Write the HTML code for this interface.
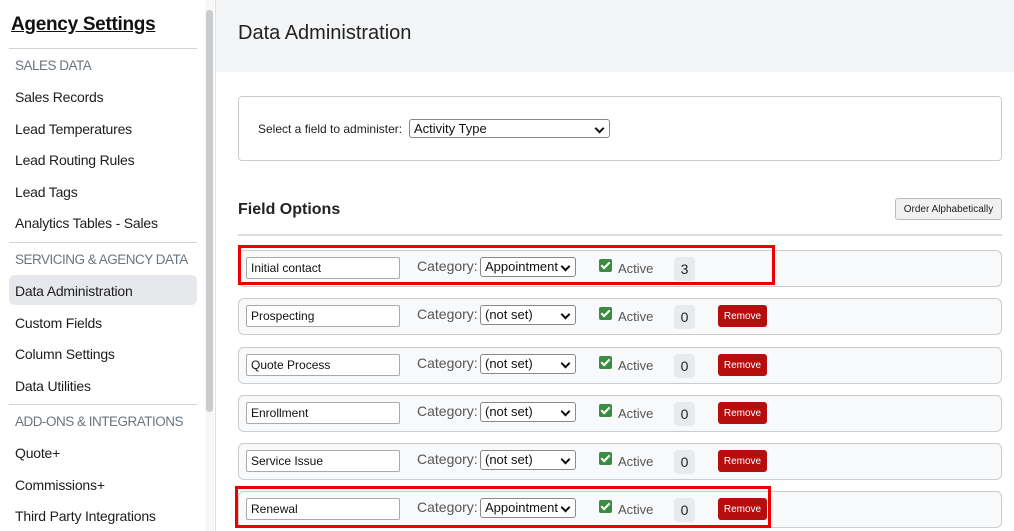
<!DOCTYPE html><html><head><style>
body{margin:0;width:1014px;height:531px;overflow:hidden;font-family:"Liberation Sans",sans-serif;background:#fff;position:relative;color:#212529}
.sb{position:absolute;left:0;top:0;width:204px;height:531px}
.sb h1{position:absolute;left:11px;top:14px;margin:0;font-size:19px;font-weight:bold;text-decoration:underline;color:#111;letter-spacing:-0.3px}
.it{position:absolute;left:15px;font-size:14px;color:#1d1d1d;white-space:nowrap;letter-spacing:-0.2px}
.sec{position:absolute;left:15px;font-size:13.5px;color:#6c757d;white-space:nowrap;letter-spacing:-0.5px}
.hr{position:absolute;left:9px;width:188px;border-top:1px solid #ced4da}
.act{position:absolute;left:9px;top:275px;width:188px;height:30px;background:#e6e8eb;border-radius:6px}
.scroll{position:absolute;left:205px;top:0;width:9px;height:531px;background:#f7f7f7}
.thumb{position:absolute;left:206px;top:10px;width:7px;height:402px;background:#c9cbcd;border-radius:4px}
.vl{position:absolute;left:215px;top:0;height:531px;border-left:1px solid #dee2e6}
.hd{position:absolute;left:216px;top:0;right:0;height:72px;background:#f4f5f6}
.hd div{position:absolute;left:22px;top:22px;font-size:20px;color:#222}
.box{position:absolute;left:238px;top:96px;width:762px;height:63px;border:1px solid #ccc;border-radius:4px}
.lbl{position:absolute;font-size:12px;color:#222}
.sel{position:absolute;border:1px solid #888;border-radius:3px;background:#fff;font-size:13px;padding-left:4px;box-sizing:border-box;line-height:18px;color:#111}
.sel:after{content:"";position:absolute;right:6px;top:5px;width:5px;height:5px;border-right:2px solid #111;border-bottom:2px solid #111;transform:rotate(45deg)}
.row{position:absolute;left:238px;width:762px;height:35px;border:1px solid #ccc;border-radius:6px;background:#f8f9fa}
.row .in{position:absolute;left:7px;top:6px;width:154px;height:22px;border:1px solid #aaa;border-radius:2px;background:#fff;box-sizing:border-box;font-size:12px;padding-left:4px;line-height:20px;color:#111}
.row .cat{position:absolute;left:178px;top:7px;font-size:14px;color:#555}
.row .sel{left:241px;top:6px;width:96px;height:20px}
.cb{position:absolute;left:360px;top:8px;width:13px;height:13px;background:#3c8c40;border-radius:2px}
.cb:after{content:"";position:absolute;left:4px;top:1px;width:3px;height:7px;border-right:2px solid #fff;border-bottom:2px solid #fff;transform:rotate(45deg)}
.row .a{position:absolute;left:379px;top:10px;font-size:13px;color:#555}
.cnt{position:absolute;left:435px;top:6px;width:21px;height:24px;background:#e9eaec;border-radius:4px;text-align:center;line-height:24px;font-size:14px;color:#222}
.rm{position:absolute;left:479px;top:6px;width:49px;height:22px;background:#b50e0e;border-radius:3px;color:#fff;font-size:10px;display:flex;align-items:center;justify-content:center}
.red{position:absolute;border:3px solid #e00;box-sizing:border-box}
</style></head><body>
<div class="sb">
<h1>Agency Settings</h1>
<div class="hr" style="top:48px"></div>
<div class="sec" style="top:58px">SALES DATA</div>
<div class="it" style="top:89px">Sales Records</div>
<div class="it" style="top:121px">Lead Temperatures</div>
<div class="it" style="top:152px">Lead Routing Rules</div>
<div class="it" style="top:184px">Lead Tags</div>
<div class="it" style="top:215px">Analytics Tables - Sales</div>
<div class="hr" style="top:242px"></div>
<div class="sec" style="top:252px">SERVICING &amp; AGENCY DATA</div>
<div class="act"></div>
<div class="it" style="top:283px">Data Administration</div>
<div class="it" style="top:315px">Custom Fields</div>
<div class="it" style="top:346px">Column Settings</div>
<div class="it" style="top:378px">Data Utilities</div>
<div class="hr" style="top:404px"></div>
<div class="sec" style="top:414px">ADD-ONS &amp; INTEGRATIONS</div>
<div class="it" style="top:445px">Quote+</div>
<div class="it" style="top:477px">Commissions+</div>
<div class="it" style="top:508px">Third Party Integrations</div>
</div>
<div class="scroll"></div><div class="thumb"></div><div class="vl"></div>
<div class="hd"><div>Data Administration</div></div>
<div class="box"></div>
<div class="lbl" style="left:258px;top:122px">Select a field to administer:</div>
<div class="sel" style="left:409px;top:119px;width:201px;height:19px">Activity Type</div>
<div style="position:absolute;left:238px;top:201px;font-size:16px;font-weight:bold;color:#222">Field Options</div>
<div style="position:absolute;left:895px;top:198px;width:107px;height:22px;box-sizing:border-box;border:1px solid #bbb;border-radius:3px;background:#f1f1f1;font-size:10px;display:flex;align-items:center;justify-content:center;color:#222">Order Alphabetically</div>
<div style="position:absolute;left:238px;top:234px;width:764px;border-top:2px solid #ddd"></div>

<div class="row" style="top:250px"><div class="in">Initial contact</div><div class="cat">Category:</div><div class="sel">Appointment</div><div class="cb"></div><div class="a">Active</div><div class="cnt">3</div></div>
<div class="row" style="top:298px"><div class="in">Prospecting</div><div class="cat">Category:</div><div class="sel">(not set)</div><div class="cb"></div><div class="a">Active</div><div class="cnt">0</div><div class="rm">Remove</div></div>
<div class="row" style="top:347px"><div class="in">Quote Process</div><div class="cat">Category:</div><div class="sel">(not set)</div><div class="cb"></div><div class="a">Active</div><div class="cnt">0</div><div class="rm">Remove</div></div>
<div class="row" style="top:395px"><div class="in">Enrollment</div><div class="cat">Category:</div><div class="sel">(not set)</div><div class="cb"></div><div class="a">Active</div><div class="cnt">0</div><div class="rm">Remove</div></div>
<div class="row" style="top:443px"><div class="in">Service Issue</div><div class="cat">Category:</div><div class="sel">(not set)</div><div class="cb"></div><div class="a">Active</div><div class="cnt">0</div><div class="rm">Remove</div></div>
<div class="row" style="top:491px"><div class="in">Renewal</div><div class="cat">Category:</div><div class="sel">Appointment</div><div class="cb"></div><div class="a">Active</div><div class="cnt">0</div><div class="rm">Remove</div></div>
<div class="red" style="left:238px;top:245px;width:537px;height:40px"></div>
<div class="red" style="left:235px;top:486px;width:536px;height:42px"></div>
</body></html>
